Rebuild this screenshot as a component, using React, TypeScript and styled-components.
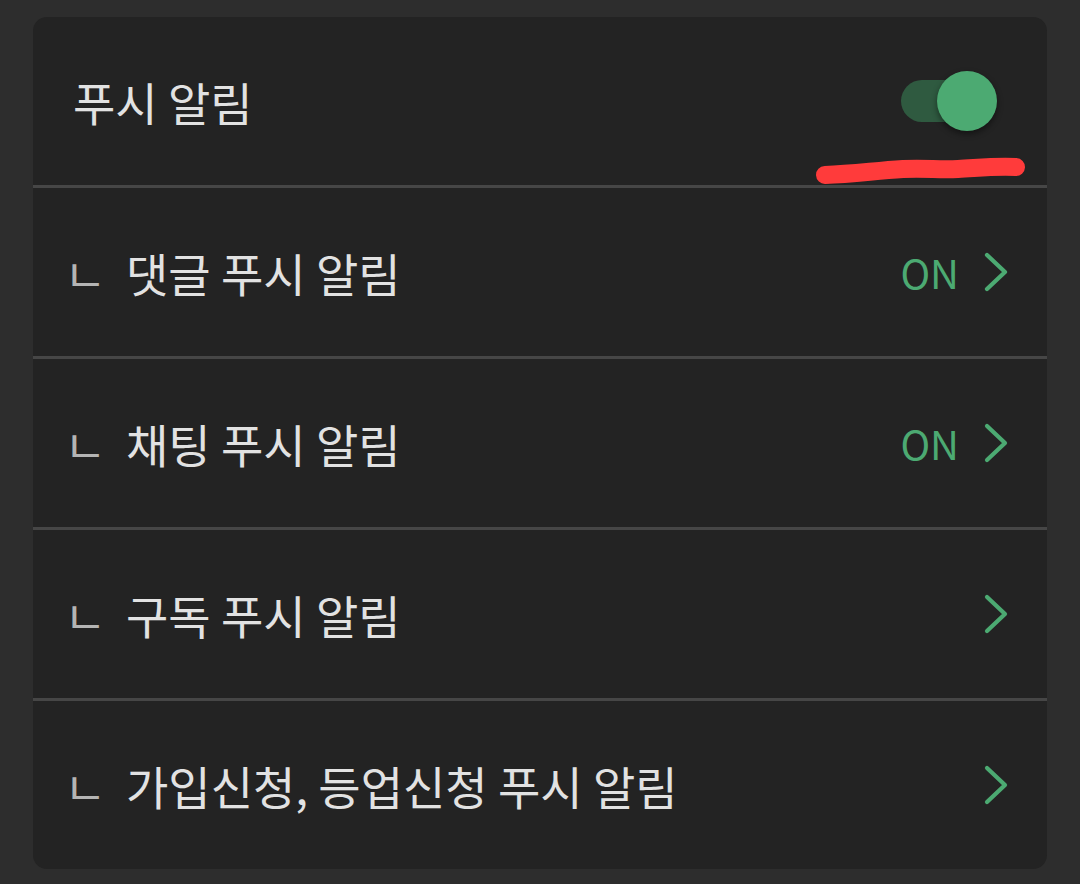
import styled, { createGlobalStyle } from 'styled-components';

const GlobalStyle = createGlobalStyle`
  html, body {
    margin: 0;
    padding: 0;
    background: #2d2d2d;
  }
  body {
    font-family: "Noto Sans CJK KR", "Noto Sans", sans-serif;
  }
`;

const Page = styled.div`
  width: 1080px;
  height: 884px;
  padding: 17px 33px 0 33px;
  box-sizing: border-box;
`;

const Card = styled.section`
  width: 1014px;
  background: #232323;
  border-radius: 14px;
  overflow: hidden;
  display: flex;
  flex-direction: column;
`;

const Row = styled.div<{ $last?: boolean }>`
  position: relative;
  height: 168px;
  display: flex;
  align-items: center;
  padding: 0 38px 0 40px;
  border-bottom: ${(p) => (p.$last ? 'none' : '3px solid #464646')};
  box-sizing: content-box;
`;

const Title = styled.span`
  flex: 1;
  color: #e2e2e2;
  font-size: 46px;
  white-space: nowrap;
`;

const SubMark = styled.span`
  width: 53px;
  margin-left: -9px;
  padding-right: 9px;
  color: #b4b4b4;
  font-size: 46px;
  line-height: 1;
`;

const Status = styled.span`
  color: #4caa72;
  font-size: 40px;
  margin-right: 24px;
`;

const Chevron = styled.svg`
  width: 26px;
  height: 42px;
  display: block;
`;

const Toggle = styled.div`
  position: relative;
  width: 96px;
  height: 60px;
  margin-right: 12px;
  display: flex;
  align-items: center;
`;

const Track = styled.div`
  width: 84px;
  height: 42px;
  border-radius: 21px;
  background: #2f5a40;
`;

const Knob = styled.div`
  position: absolute;
  right: 0;
  top: 0;
  width: 60px;
  height: 60px;
  border-radius: 50%;
  background: #4caa72;
  box-shadow: 0 3px 6px rgba(0, 0, 0, 0.45);
`;

const Scribble = styled.svg`
  position: absolute;
  left: 780px;
  top: 136px;
  width: 214px;
  height: 34px;
`;

const subItems = [
  { label: '댓글 푸시 알림', status: 'ON' },
  { label: '채팅 푸시 알림', status: 'ON' },
  { label: '구독 푸시 알림' },
  { label: '가입신청, 등업신청 푸시 알림' },
];

function Arrow() {
  return (
    <Chevron viewBox="0 0 26 42">
      <path
        d="M4 4 L22 21 L4 38"
        fill="none"
        stroke="#4caa72"
        strokeWidth="4.2"
        strokeLinecap="round"
        strokeLinejoin="round"
      />
    </Chevron>
  );
}

export default function App() {
  return (
    <>
      <GlobalStyle />
      <Page>
        <Card>
          <Row>
            <Title>푸시 알림</Title>
            <Toggle>
              <Track />
              <Knob />
            </Toggle>
            <Scribble viewBox="0 0 214 34">
              <path
                d="M12 22 C40 21 60 18 90 16 C115 15 125 17 145 16 C165 15 180 13 203 14"
                fill="none"
                stroke="#ff3b3b"
                strokeWidth="18"
                strokeLinecap="round"
                strokeLinejoin="round"
              />
            </Scribble>
          </Row>
          {subItems.map((item, i) => (
            <Row key={item.label} $last={i === subItems.length - 1}>
              <SubMark>ㄴ</SubMark>
              <Title>{item.label}</Title>
              {item.status && <Status>{item.status}</Status>}
              <Arrow />
            </Row>
          ))}
        </Card>
      </Page>
    </>
  );
}
